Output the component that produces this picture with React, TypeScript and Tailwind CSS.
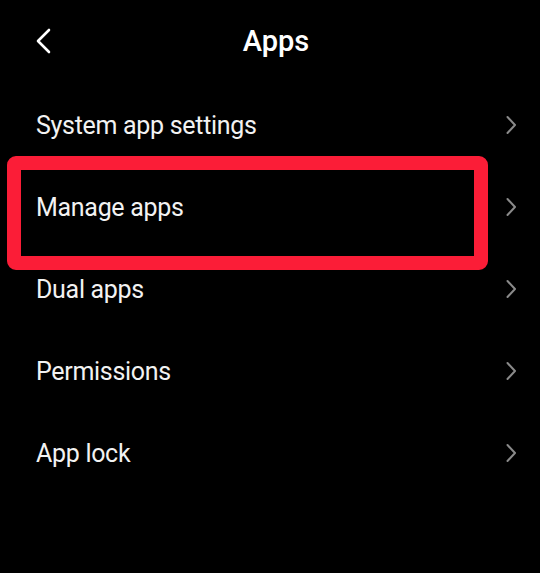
const items = [
  "System app settings",
  "Manage apps",
  "Dual apps",
  "Permissions",
  "App lock",
];

function BackArrow() {
  return (
    <svg width="24" height="28" viewBox="0 0 24 28" className="shrink-0">
      <path d="M16 3 L5 14 L16 25" fill="none" stroke="#ffffff" strokeWidth="2.6" strokeLinecap="round" strokeLinejoin="round" />
    </svg>
  );
}

function Chevron() {
  return (
    <svg width="12" height="20" viewBox="0 0 12 20" className="shrink-0">
      <path d="M2.5 2 L10 10 L2.5 18" fill="none" stroke="#8a8a8a" strokeWidth="2" strokeLinecap="round" strokeLinejoin="round" />
    </svg>
  );
}

function Row({ label, highlight }: { label: string; highlight?: boolean }) {
  return (
    <div className="relative h-[82px] flex items-center pl-[36px] pr-[23px]">
      <span className="flex-1 text-[25px] tracking-[-0.3px] text-[#f2f2f2] leading-none">{label}</span>
      <Chevron />
      {highlight && (
        // annotation drawn over the row
        <div className="absolute left-[7px] top-[-10px] w-[481px] h-[114px] border-[14px] border-[#fb1d37] rounded-[9px]" />
      )}
    </div>
  );
}

export default function App() {
  return (
    <div className="w-[540px] h-[573px] bg-black overflow-hidden" style={{ fontFamily: "Roboto, 'Noto Sans', sans-serif" }}>
      <div className="h-[84px] flex items-center pl-[33px] pr-[33px] pb-[2px]">
        <BackArrow />
        <div className="flex-1 text-center text-[29px] font-medium text-white pl-[12px] leading-none">Apps</div>
        <div className="w-[24px]" />
      </div>
      <div className="flex flex-col">
        {items.map((label) => (
          <Row key={label} label={label} highlight={label === "Manage apps"} />
        ))}
      </div>
    </div>
  );
}
